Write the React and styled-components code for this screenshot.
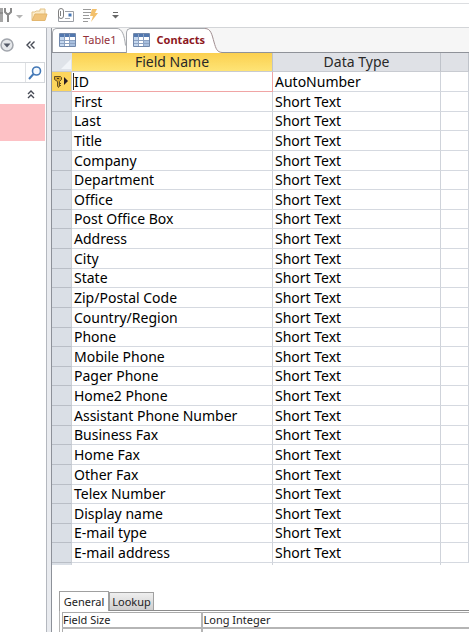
import React from "react";
import styled, { createGlobalStyle, css } from "styled-components";

const GlobalStyle = createGlobalStyle`
  *, *::before, *::after { box-sizing: border-box; }
  body {
    margin: 0;
    background: #fff;
    color: #111;
    font-family: "Noto Sans", "Open Sans", sans-serif;
    overflow: hidden;
  }
  button, input { font: inherit; color: inherit; margin: 0; padding: 0; border: 0; background: none; }
  svg { display: block; flex: none; }
`;

const Window = styled.div`
  display: flex;
  flex-direction: column;
  height: 100vh;
  overflow: hidden;
`;

const Toolbar = styled.header`
  display: flex;
  align-items: center;
  flex: none;
  height: 28px;
  padding-top: 3px;
  border-bottom: 1px solid #d3d5d8;
  background: linear-gradient(#fff 3px, #dcdee1 3px, #dcdee1 4px, #fff 4px);
`;

const ToolButton = styled.button`
  display: flex;
  align-items: center;
  justify-content: center;
  width: ${(p) => p.$width}px;
  height: 20px;
`;

const Workspace = styled.div`
  display: flex;
  flex: 1;
  min-height: 0;
`;

const Navigation = styled.nav`
  flex: none;
  width: 46px;
  background: #fff;
`;

const NavHeader = styled.div`
  display: flex;
  align-items: center;
  justify-content: space-between;
  height: 34px;
  padding-right: 10px;
`;

const SearchBar = styled.form`
  display: flex;
  height: 21px;
  margin-right: 1px;
  border: 1px solid #d5d8dc;
  border-left: 0;
`;

const SearchInput = styled.input`
  flex: 1;
  min-width: 0;
  outline: 0;
  font-size: 11px;
`;

const SearchButton = styled.button`
  display: grid;
  place-items: center;
  width: 19px;
  border-left: 1px solid #dfe1e4;
`;

const GroupHeader = styled.button`
  display: flex;
  align-items: center;
  justify-content: flex-end;
  width: 100%;
  height: 21px;
  padding: 2px 11px 0 0;
`;

const SelectedObject = styled.button`
  display: block;
  width: 45px;
  height: 37px;
  background: #fdc1c5;
`;

const Splitter = styled.div`
  flex: none;
  width: 6px;
  border-left: 1px solid #b4b8bf;
  border-right: 1px solid #8d9199;
  background: #e9ebef;
`;

const Document = styled.main`
  display: flex;
  flex-direction: column;
  flex: 1;
  min-width: 0;
`;

const DocumentTabs = styled.div`
  display: flex;
  flex: none;
  height: 25px;
  border-bottom: 1px solid #8f9299;
  background: #f6f6f6;
`;

const DocumentTab = styled.button`
  display: flex;
  height: ${(p) => (p.$active ? 25 : 24)}px;
  color: #93303a;
  font-size: 11px;
  line-height: 20px;
  ${(p) => p.$active && css`
    color: #8d1822;
    font-weight: 700;
  `}
`;

const TabFace = styled.span`
  display: flex;
  align-items: center;
  gap: 7px;
  height: 100%;
  padding: 0 0 2px 6px;
  border: 1px solid #a4a7ac;
  border-right: 0;
  border-bottom: 0;
  border-radius: 5px 0 0 0;
  background: #fff;
`;

const DesignTable = styled.table`
  flex: none;
  width: 100%;
  border-collapse: separate;
  border-spacing: 0;
  table-layout: fixed;
  font-size: 14px;
  line-height: 18px;
`;

const HeaderCell = styled.th`
  height: 19px;
  padding: 0;
  border-right: 1px solid #bfc3ca;
  border-bottom: 1px solid #c8cbd1;
  background: ${(p) => (p.$selected ? "linear-gradient(#fbd04f, #fee476)" : "#dfe1e6")};
  color: #292929;
  font-weight: 400;
  text-align: center;
`;

const CornerCell = styled.td`
  padding: 0 1px 2px 0;
  border-bottom: 1px solid #c8cbd1;
  background: #dfe3e9;
  vertical-align: bottom;

  svg { margin-left: auto; }
`;

const FieldRow = styled.tr`
  height: 20px;

  &:nth-child(8n + 3), &:nth-child(8n + 6), &:nth-child(8n) { height: 19px; }
`;

const Selector = styled.td`
  padding: 0;
  border-right: 1px solid #cdd1d7;
  border-bottom: 1px solid #b9bec6;
  background: ${(p) => (p.$current ? "#fcd55d" : "#dadfe6")};
`;

const Cell = styled.td`
  padding: 0 2px;
  border-right: 1px solid #cfd3da;
  border-bottom: 1px solid #d5d9e0;
  color: #000;
  white-space: nowrap;
  ${(p) => p.$editing && css`
    padding-left: 1px;
    border-right-color: #f0a5a5;
    border-bottom-color: #f0a5a5;
  `}
`;

const NameInput = styled.input`
  display: block;
  width: 100%;
  height: 17px;
  border-left: 1px solid #333;
  outline: 0;
`;

const GridTail = styled.div`
  display: grid;
  grid-template-columns: 20px 201px 168px 1fr;
  flex: none;
  height: 2px;
`;

const TailCell = styled.span`
  border-right: 1px solid #cfd3da;
  background: ${(p) => (p.$selector ? "#dadfe6" : "#fff")};
`;

const Properties = styled.section`
  flex: none;
  margin: 26px 0 0 7px;
  font-size: 11px;
`;

const PropertyTabs = styled.div`
  display: flex;
  align-items: flex-end;
  height: 20px;
  border-bottom: 1px solid #8c8c8c;
`;

const PropertyTab = styled.button`
  width: ${(p) => (p.$active ? 50 : 45)}px;
  height: ${(p) => (p.$active ? 20 : 18)}px;
  border: 1px solid #a0a0a0;
  border-bottom: 0;
  background: ${(p) => (p.$active ? "#fff" : "linear-gradient(#efefef, #cfcfcf)")};
  color: #222;
  line-height: 16px;
  ${(p) => p.$active && css`
    margin-bottom: -1px;
  `}
`;

const PropertyPage = styled.div`
  padding: 1px 0 0 2px;
  border-left: 1px solid #b5b5b5;
`;

const PropertyTable = styled.table`
  width: 100%;
  border-collapse: collapse;
  table-layout: fixed;
  line-height: 13px;
  color: #222;
`;

const PropertyName = styled.th`
  width: 139px;
  height: 15px;
  padding: 0 1px 0 0;
  border: 1px solid #ababab;
  border-right: 2px solid #b5b5b5;
  border-bottom: 2px solid #b5b5b5;
  font-weight: 400;
  text-align: left;
`;

const PropertyValue = styled.td`
  padding: 0 1px;
  border-top: 1px solid #ababab;
  border-bottom: 2px solid #b5b5b5;
`;

const fields = [
  "ID", "First", "Last", "Title", "Company", "Department", "Office",
  "Post Office Box", "Address", "City", "State", "Zip/Postal Code",
  "Country/Region", "Phone", "Mobile Phone", "Pager Phone", "Home2 Phone",
  "Assistant Phone Number", "Business Fax", "Home Fax", "Other Fax",
  "Telex Number", "Display name", "E-mail type", "E-mail address",
];

const ToolsIcon = () => (
  <svg width="12" height="16" viewBox="0 0 12 16">
    <path d="M1.5 1v14" stroke="#a6a6a6" strokeWidth="3" />
    <path d="M0 6h3" stroke="#777" />
    <path d="M5 1v4l2 2h2l2-2V1M8 7v8" fill="none" stroke="#8b8b8b" strokeWidth="2" />
  </svg>
);

const DropIcon = ({ bar, color }) => (
  <svg width="7" height="7" viewBox="0 0 7 7">
    {bar && <path d="M1 .5h5" stroke={color} />}
    <path d="M0 3h7L3.500 6.500z" fill={color} />
  </svg>
);

const FolderIcon = () => (
  <svg width="17" height="14" viewBox="0 0 17 14">
    <path d="M1 12V4h3l1-1h4V1h5v5" fill="#fbeccb" stroke="#e3c389" />
    <path d="M1 12.500 4 6h12l-2 6.500z" fill="#f0c47d" stroke="#e3b76f" />
  </svg>
);

const MailIcon = () => (
  <svg width="17" height="15" viewBox="0 0 17 15">
    <path d="M1.500 5v8.500h15V3.500H8" fill="#fff" stroke="#9a9ea5" />
    <path d="M3.500 8V3M6.500 3v5a2 2 0 0 1-5 0V3a2.500 2.500 0 0 1 5 0" fill="none" stroke="#7f7f7f" />
    <path d="M11.500 5.500h3v3h-3z" fill="#4777b5" />
    <path d="M8 10.500h5" stroke="#a7abb1" />
  </svg>
);

const LightningIcon = () => (
  <svg width="16" height="15" viewBox="0 0 16 15">
    <path d="M0 1.500h8M0 4.500h8M0 7.500h6M0 10.500h7M0 13.500h5" stroke="#9a9a9a" />
    <path d="M9 1h5l-2 4h3l-7 9 2-6H7z" fill="#f3c06b" />
  </svg>
);

const CircleDropIcon = () => (
  <svg width="14" height="14" viewBox="0 0 14 14">
    <circle cx="7" cy="7" r="6" fill="#e6e8eb" stroke="#a1a5ac" strokeWidth="1.500" />
    <path d="M3.500 5.500h7L7 9.500z" fill="#525866" />
  </svg>
);

const DoubleChevron = ({ up }) => (
  <svg width={up ? 8 : 10} height={up ? 9 : 8} viewBox={up ? "0 0 8 9" : "0 0 10 8"}>
    <path
      d={up ? "m1 4 3-3 3 3M1 8l3-3 3 3" : "M4.500.5 1 4l3.500 3.500M8.500.5 5 4l3.500 3.500"}
      fill="none" stroke="#454954" strokeWidth="1.400"
    />
  </svg>
);

const SearchIcon = () => (
  <svg width="14" height="14" viewBox="0 0 14 14">
    <circle cx="8.500" cy="5" r="4" fill="#f5faff" stroke="#4378b6" strokeWidth="1.600" />
    <path d="m5.500 8-4.500 5" stroke="#4378b6" strokeWidth="2" />
  </svg>
);

const TableIcon = () => (
  <svg width="17" height="14" viewBox="0 0 17 14">
    <path d="M.5.5h16v13H.5z" fill="#fff" stroke="#7188ab" />
    <path d="M1 1h15v3H1z" fill="#5278af" />
    <path d="M1 4h4v9H1z" fill="#c5d8ef" />
    <path d="M11 7h5v6h-5z" fill="#a9c0df" />
    <path d="M1 7.500h15M1 10.500h15M5.500 1v12M10.500 1v12" stroke="#8ca2c2" />
  </svg>
);

const TabCurve = ({ active }) => (
  active ? (
    <svg width="17" height="25" viewBox="0 0 17 25">
      <path d="M0 .5C6 .5 7 7 9 14c2 7 3 10 8 10.500V25H0z" fill="#fff" />
      <path d="M0 .5C6 .5 7 7 9 14c2 7 3 10 8 10.500" fill="none" stroke="#a18e91" />
    </svg>
  ) : (
    <svg width="9" height="24" viewBox="0 0 9 24">
      <path d="M0 .5c5 0 7.500 7 8.500 17V24H0z" fill="#fff" />
      <path d="M0 .5c5 0 7.500 7 8.500 17" fill="none" stroke="#a4a7ac" />
    </svg>
  )
);

const CornerIcon = () => (
  <svg width="10" height="10" viewBox="0 0 10 10">
    <path d="M10 0v10H0z" fill="#f1f4f8" />
  </svg>
);

const KeyIcon = () => (
  <svg width="18" height="14" viewBox="0 0 18 14">
    <path d="M2.500 1.500h6l1 1v2L7.500 6.500V11l-1 1.500-1-1.500V6.500l-3-2z" fill="#d5a429" stroke="#665022" />
    <path d="M5 3h2v1H5z" fill="#4d3a12" />
    <path d="M7 8.500h2M7 10.500h2" stroke="#665022" />
    <path d="m12 2 4 4-4 4z" fill="#291d24" />
  </svg>
);

export default function App() {
  return (
    <>
      <GlobalStyle />
      <Window>
        <Toolbar>
          <ToolButton $width={12} aria-label="Tools"><ToolsIcon /></ToolButton>
          <ToolButton $width={14} aria-label="Tool options"><DropIcon color="#b4b4b4" /></ToolButton>
          <ToolButton $width={26} aria-label="Open"><FolderIcon /></ToolButton>
          <ToolButton $width={26} aria-label="Attach mail"><MailIcon /></ToolButton>
          <ToolButton $width={26} aria-label="Run"><LightningIcon /></ToolButton>
          <ToolButton $width={22} aria-label="Customize toolbar"><DropIcon bar color="#686868" /></ToolButton>
        </Toolbar>

        <Workspace>
          <Navigation aria-label="Objects">
            <NavHeader>
              <button aria-label="Filter objects"><CircleDropIcon /></button>
              <button aria-label="Collapse pane"><DoubleChevron /></button>
            </NavHeader>
            <SearchBar onSubmit={(e) => e.preventDefault()}>
              <SearchInput type="text" aria-label="Search objects" />
              <SearchButton aria-label="Search"><SearchIcon /></SearchButton>
            </SearchBar>
            <GroupHeader aria-label="Collapse group"><DoubleChevron up /></GroupHeader>
            <SelectedObject aria-label="Selected object" />
          </Navigation>
          <Splitter />

          <Document>
            <DocumentTabs role="tablist">
              <DocumentTab role="tab" aria-selected="false">
                <TabFace><TableIcon />Table1</TabFace>
                <TabCurve />
              </DocumentTab>
              <DocumentTab role="tab" aria-selected="true" $active>
                <TabFace><TableIcon />Contacts</TabFace>
                <TabCurve active />
              </DocumentTab>
            </DocumentTabs>

            <DesignTable>
              <colgroup>
                <col width="20" />
                <col width="201" />
                <col width="168" />
                <col />
              </colgroup>
              <thead>
                <tr>
                  <CornerCell><CornerIcon /></CornerCell>
                  <HeaderCell $selected scope="col">Field Name</HeaderCell>
                  <HeaderCell scope="col">Data Type</HeaderCell>
                  <HeaderCell as="td" />
                </tr>
              </thead>
              <tbody>
                {fields.map((name, i) => (
                  <FieldRow key={name}>
                    <Selector $current={i === 0}>{i === 0 && <KeyIcon />}</Selector>
                    <Cell $editing={i === 0}>
                      {i === 0 ? <NameInput type="text" aria-label="Field name" defaultValue={name} /> : name}
                    </Cell>
                    <Cell>{i === 0 ? "AutoNumber" : "Short Text"}</Cell>
                    <Cell />
                  </FieldRow>
                ))}
              </tbody>
            </DesignTable>
            <GridTail>
              <TailCell $selector />
              <TailCell />
              <TailCell />
            </GridTail>

            <Properties>
              <PropertyTabs role="tablist">
                <PropertyTab role="tab" aria-selected="true" $active>General</PropertyTab>
                <PropertyTab role="tab" aria-selected="false">Lookup</PropertyTab>
              </PropertyTabs>
              <PropertyPage>
                <PropertyTable>
                  <tbody>
                    <tr>
                      <PropertyName scope="row">Field Size</PropertyName>
                      <PropertyValue>Long Integer</PropertyValue>
                    </tr>
                    <tr>
                      <PropertyName as="td" />
                      <PropertyValue />
                    </tr>
                  </tbody>
                </PropertyTable>
              </PropertyPage>
            </Properties>
          </Document>
        </Workspace>
      </Window>
    </>
  );
}
